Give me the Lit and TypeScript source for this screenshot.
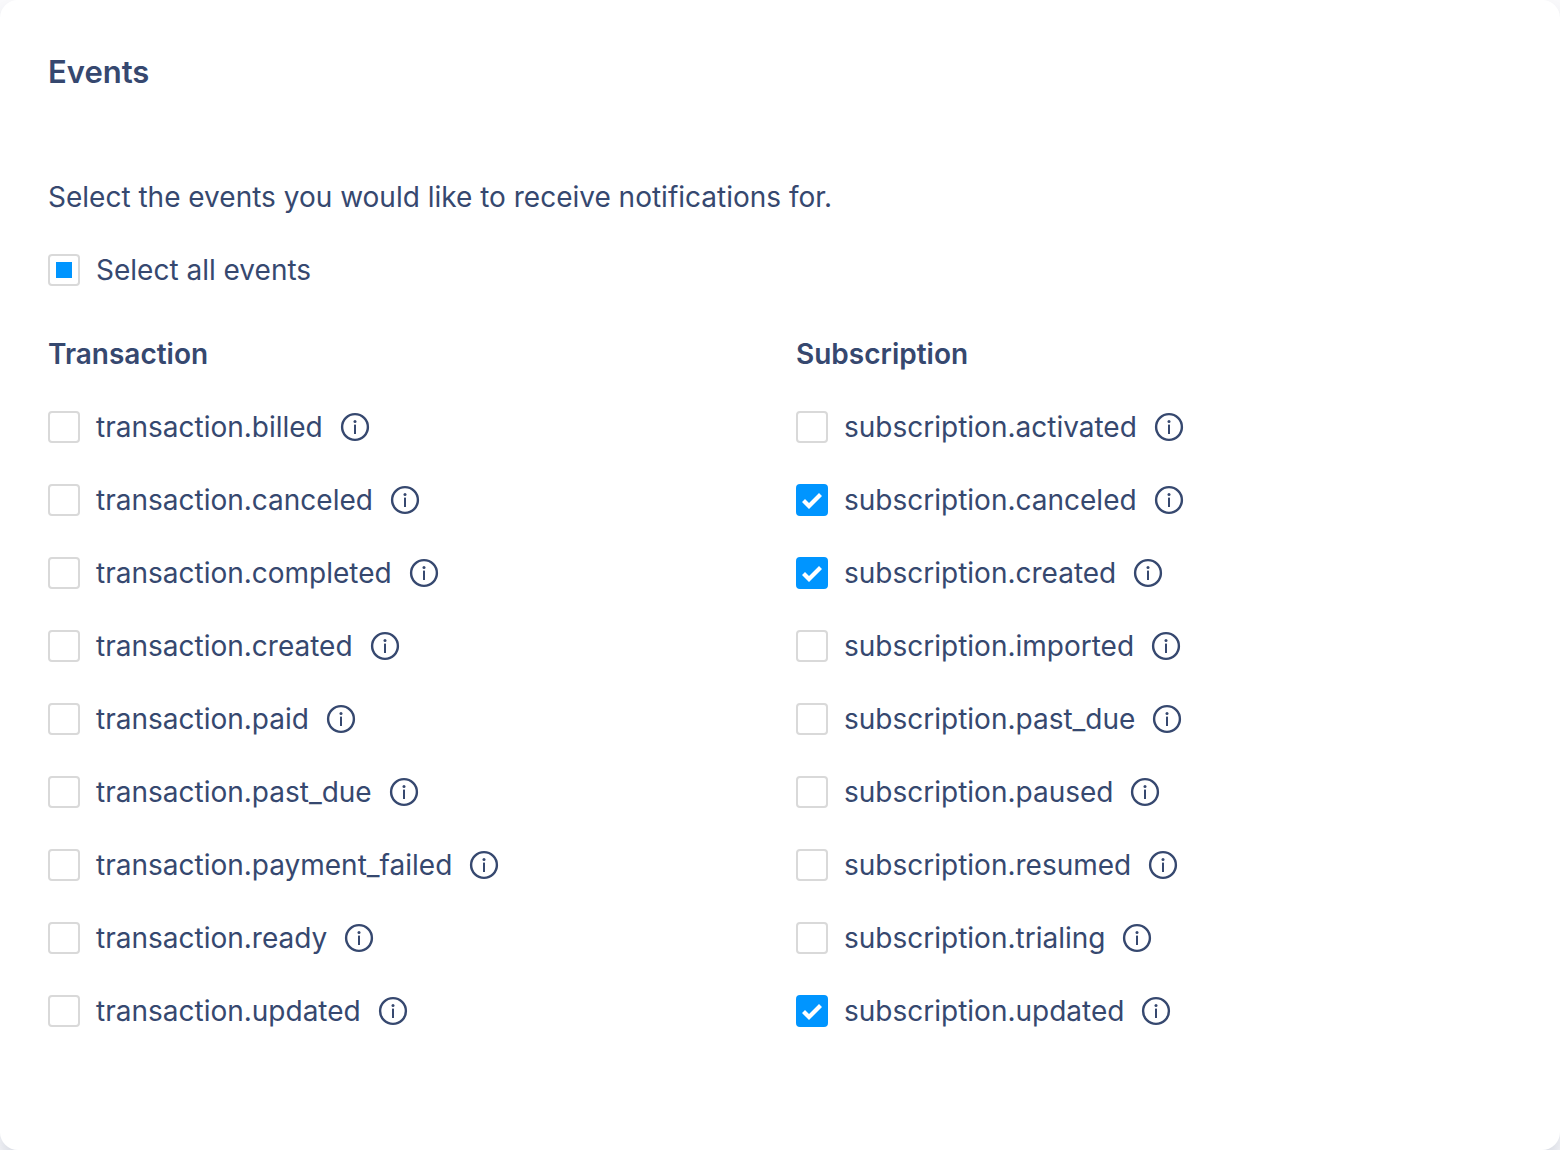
import { LitElement, html, css } from "lit";
import { customElement, property, state } from "lit/decorators.js";

interface EventGroup {
  title: string;
  events: string[];
}

const GROUPS: EventGroup[] = [
  {
    title: "Transaction",
    events: [
      "transaction.billed",
      "transaction.canceled",
      "transaction.completed",
      "transaction.created",
      "transaction.paid",
      "transaction.past_due",
      "transaction.payment_failed",
      "transaction.ready",
      "transaction.updated",
    ],
  },
  {
    title: "Subscription",
    events: [
      "subscription.activated",
      "subscription.canceled",
      "subscription.created",
      "subscription.imported",
      "subscription.past_due",
      "subscription.paused",
      "subscription.resumed",
      "subscription.trialing",
      "subscription.updated",
    ],
  },
];

const ALL_EVENTS = GROUPS.flatMap((group) => group.events);

@customElement("event-option")
export class EventOption extends LitElement {
  @property() label = "";
  @property({ type: Boolean }) checked = false;
  @property({ type: Boolean }) indeterminate = false;
  @property({ type: Boolean }) info = false;

  static styles = css`
    :host {
      display: flex;
      align-items: center;
      gap: 16px;
      height: 32px;
    }
    .option {
      display: flex;
      align-items: center;
      gap: 16px;
      cursor: pointer;
    }
    .box {
      display: grid;
      place-items: center;
      width: 32px;
      height: 32px;
      margin: 0;
      box-sizing: border-box;
      appearance: none;
      border: 2px solid #d9d9d9;
      border-radius: 4px;
      background: #fff;
      cursor: pointer;
    }
    .box:checked {
      border-color: #0095ff;
      background: #0095ff;
    }
    .box:checked::before {
      content: "";
      width: 22px;
      height: 18px;
      background: #fff;
      clip-path: polygon(1px 11px, 4px 8px, 8px 12px, 18px 2px, 21px 5px, 8px 18px);
    }
    .box:indeterminate::before {
      content: "";
      width: 16px;
      height: 16px;
      background: #0095ff;
    }
    .info {
      display: flex;
      padding: 0;
      border: 0;
      background: none;
      color: inherit;
      cursor: pointer;
    }
  `;

  private onChange(e: Event) {
    const checked = (e.target as HTMLInputElement).checked;
    this.dispatchEvent(new CustomEvent("toggle-option", { detail: checked }));
  }

  render() {
    return html`
      <label class="option" for="box">
        <input
          class="box"
          id="box"
          type="checkbox"
          .checked=${this.checked}
          .indeterminate=${this.indeterminate}
          @change=${this.onChange}
        />
        <span>${this.label}</span>
      </label>
      ${this.info
        ? html`<button class="info" type="button" aria-label="About ${this.label}">
            <svg width="32" height="32" viewBox="0 0 32 32" fill="none" aria-hidden="true">
              <circle cx="16" cy="16" r="12.9" stroke="currentColor" stroke-width="2.4" />
              <circle cx="16" cy="10.4" r="1.5" fill="currentColor" />
              <rect x="15" y="13.6" width="2" height="9.4" fill="currentColor" />
            </svg>
          </button>`
        : null}
    `;
  }
}

@customElement("app-root")
export class AppRoot extends LitElement {
  @state() private selected = new Set<string>([
    "subscription.canceled",
    "subscription.created",
    "subscription.updated",
  ]);

  static styles = css`
    :host {
      display: block;
      overflow: hidden;
      background: #f9f9fb;
      color: #36486f;
      font-family: Inter, "Liberation Sans", sans-serif;
      font-size: 28px;
      line-height: 32px;
    }
    .card {
      display: flex;
      flex-direction: column;
      min-height: 100vh;
      box-sizing: border-box;
      padding: 56px 48px;
      border-radius: 18px;
      background: #fff;
      box-shadow: 0 12px 16px rgba(54, 72, 111, 0.16);
    }
    .title,
    .subtitle,
    .intro {
      margin: 0;
    }
    .title {
      font-size: 31px;
      font-weight: 600;
    }
    .intro {
      margin-top: 93px;
    }
    .all {
      margin-top: 41px;
    }
    .groups {
      display: grid;
      grid-template-columns: repeat(2, minmax(0, 1fr));
      gap: 32px;
      margin-top: 52px;
    }
    .group {
      display: flex;
      flex-direction: column;
      gap: 41px;
    }
    .subtitle {
      font-size: 28px;
      font-weight: 600;
    }
  `;

  private toggle(name: string, checked: boolean) {
    const next = new Set(this.selected);
    if (checked) next.add(name);
    else next.delete(name);
    this.selected = next;
  }

  private toggleAll(checked: boolean) {
    this.selected = new Set(checked ? ALL_EVENTS : []);
  }

  render() {
    const count = this.selected.size;
    const all = count === ALL_EVENTS.length;
    return html`
      <main class="card">
        <h1 class="title">Events</h1>
        <p class="intro">Select the events you would like to receive notifications for.</p>
        <event-option
          class="all"
          label="Select all events"
          ?checked=${all}
          ?indeterminate=${count > 0 && !all}
          @toggle-option=${(e: CustomEvent<boolean>) => this.toggleAll(e.detail)}
        ></event-option>
        <div class="groups">
          ${GROUPS.map(
            (group) => html`
              <section class="group">
                <h2 class="subtitle">${group.title}</h2>
                ${group.events.map(
                  (name) => html`
                    <event-option
                      info
                      label=${name}
                      ?checked=${this.selected.has(name)}
                      @toggle-option=${(e: CustomEvent<boolean>) => this.toggle(name, e.detail)}
                    ></event-option>
                  `
                )}
              </section>
            `
          )}
        </div>
      </main>
    `;
  }
}
